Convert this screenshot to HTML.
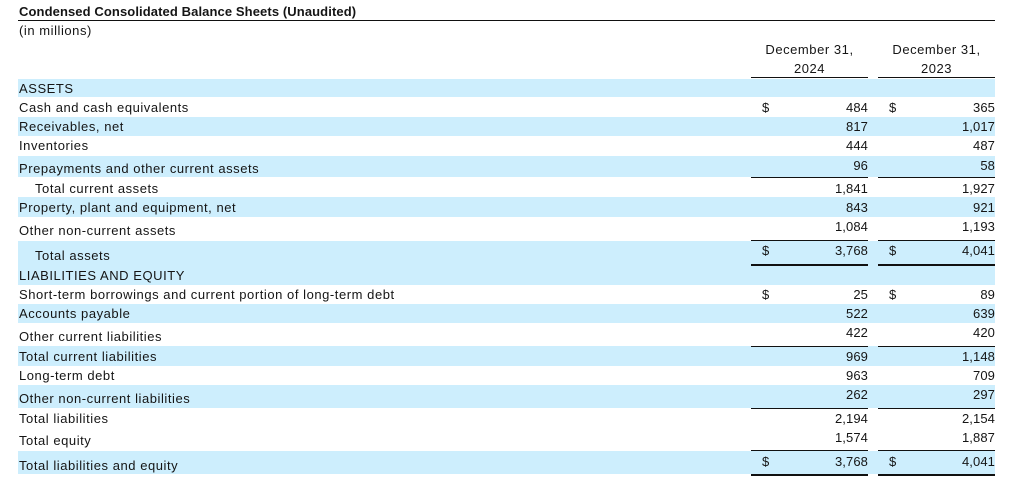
<!DOCTYPE html>
<html><head><meta charset="utf-8"><style>
body{margin:0;width:1020px;height:482px;background:#fff;font-family:"Liberation Sans",sans-serif;font-size:13px;color:#151515;position:relative;overflow:hidden;letter-spacing:0.55px}
div{position:absolute;white-space:nowrap;line-height:16px;margin-top:1px}
.b{background:#cdeefd;left:18px;width:977px;margin-top:0}
.l{height:1px;background:#111;margin-top:0}
.n{text-align:right;width:100px;letter-spacing:0.1px}
</style></head><body>
<div style="left:19px;top:3px;font-weight:bold;letter-spacing:0.1px">Condensed Consolidated Balance Sheets (Unaudited)</div>
<div class="l" style="left:18px;top:20px;width:977px"></div>
<div style="left:19px;top:22px">(in millions)</div>
<div style="left:751px;width:117px;text-align:center;top:41px">December 31,</div>
<div style="left:751px;width:117px;text-align:center;top:60px">2024</div>
<div style="left:878px;width:117px;text-align:center;top:41px">December 31,</div>
<div style="left:878px;width:117px;text-align:center;top:60px">2023</div>
<div class="l" style="left:751px;width:117px;top:77px"></div>
<div class="l" style="left:878px;width:117px;top:77px"></div>

<div class="b" style="top:79px;height:18px"></div>
<div class="b" style="top:117px;height:19px"></div>
<div class="b" style="top:156px;height:21px"></div>
<div class="b" style="top:197px;height:20px"></div>
<div class="b" style="top:241px;height:44px"></div>
<div class="b" style="top:304px;height:19px"></div>
<div class="b" style="top:346px;height:20px"></div>
<div class="b" style="top:385px;height:23px"></div>
<div class="b" style="top:451px;height:23px"></div>

<div class="l" style="left:751px;width:117px;top:177px"></div><div class="l" style="left:878px;width:117px;top:177px"></div>
<div class="l" style="left:751px;width:117px;top:240px"></div><div class="l" style="left:878px;width:117px;top:240px"></div>
<div class="l" style="left:751px;width:117px;top:264px;height:2px"></div><div class="l" style="left:878px;width:117px;top:264px;height:2px"></div>
<div class="l" style="left:751px;width:117px;top:346px"></div><div class="l" style="left:878px;width:117px;top:346px"></div>
<div class="l" style="left:751px;width:117px;top:408px"></div><div class="l" style="left:878px;width:117px;top:408px"></div>
<div class="l" style="left:751px;width:117px;top:450px"></div><div class="l" style="left:878px;width:117px;top:450px"></div>
<div class="l" style="left:751px;width:117px;top:474px;height:2px"></div><div class="l" style="left:878px;width:117px;top:474px;height:2px"></div>

<div style="left:19px;top:80px">ASSETS</div>
<div style="left:19px;top:99px">Cash and cash equivalents</div>
<div style="left:19px;top:118px">Receivables, net</div>
<div style="left:19px;top:137px">Inventories</div>
<div style="left:19px;top:160px">Prepayments and other current assets</div>
<div style="left:35px;top:180px">Total current assets</div>
<div style="left:19px;top:199px">Property, plant and equipment, net</div>
<div style="left:19px;top:222px">Other non-current assets</div>
<div style="left:35px;top:247px">Total assets</div>
<div style="left:19px;top:267px">LIABILITIES AND EQUITY</div>
<div style="left:19px;top:286px">Short-term borrowings and current portion of long-term debt</div>
<div style="left:19px;top:305px">Accounts payable</div>
<div style="left:19px;top:328px">Other current liabilities</div>
<div style="left:19px;top:348px">Total current liabilities</div>
<div style="left:19px;top:367px">Long-term debt</div>
<div style="left:19px;top:390px">Other non-current liabilities</div>
<div style="left:19px;top:410px">Total liabilities</div>
<div style="left:19px;top:432px">Total equity</div>
<div style="left:19px;top:457px">Total liabilities and equity</div>

<div style="left:762px;top:99px">$</div><div style="left:889px;top:99px">$</div>
<div style="left:762px;top:242px">$</div><div style="left:889px;top:242px">$</div>
<div style="left:762px;top:286px">$</div><div style="left:889px;top:286px">$</div>
<div style="left:762px;top:453px">$</div><div style="left:889px;top:453px">$</div>

<div class="n" style="left:768px;top:99px">484</div><div class="n" style="left:895px;top:99px">365</div>
<div class="n" style="left:768px;top:118px">817</div><div class="n" style="left:895px;top:118px">1,017</div>
<div class="n" style="left:768px;top:137px">444</div><div class="n" style="left:895px;top:137px">487</div>
<div class="n" style="left:768px;top:157px">96</div><div class="n" style="left:895px;top:157px">58</div>
<div class="n" style="left:768px;top:180px">1,841</div><div class="n" style="left:895px;top:180px">1,927</div>
<div class="n" style="left:768px;top:199px">843</div><div class="n" style="left:895px;top:199px">921</div>
<div class="n" style="left:768px;top:218px">1,084</div><div class="n" style="left:895px;top:218px">1,193</div>
<div class="n" style="left:768px;top:242px">3,768</div><div class="n" style="left:895px;top:242px">4,041</div>
<div class="n" style="left:768px;top:286px">25</div><div class="n" style="left:895px;top:286px">89</div>
<div class="n" style="left:768px;top:305px">522</div><div class="n" style="left:895px;top:305px">639</div>
<div class="n" style="left:768px;top:324px">422</div><div class="n" style="left:895px;top:324px">420</div>
<div class="n" style="left:768px;top:348px">969</div><div class="n" style="left:895px;top:348px">1,148</div>
<div class="n" style="left:768px;top:367px">963</div><div class="n" style="left:895px;top:367px">709</div>
<div class="n" style="left:768px;top:386px">262</div><div class="n" style="left:895px;top:386px">297</div>
<div class="n" style="left:768px;top:410px">2,194</div><div class="n" style="left:895px;top:410px">2,154</div>
<div class="n" style="left:768px;top:429px">1,574</div><div class="n" style="left:895px;top:429px">1,887</div>
<div class="n" style="left:768px;top:453px">3,768</div><div class="n" style="left:895px;top:453px">4,041</div>
</body></html>
